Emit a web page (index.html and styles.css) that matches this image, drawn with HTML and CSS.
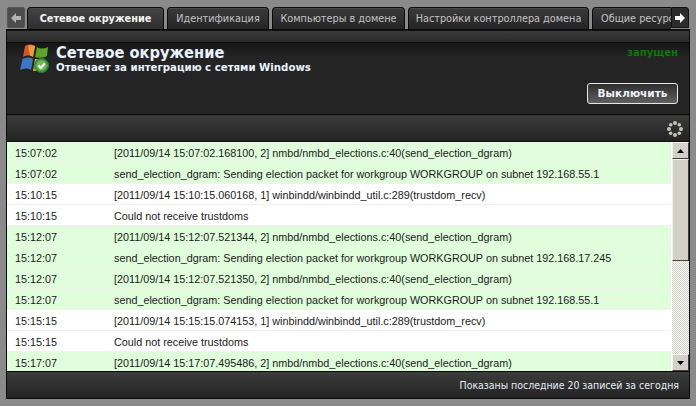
FILE: index.html
```html
<!DOCTYPE html>
<html lang="ru">
<head>
<meta charset="utf-8">
<title>Сетевое окружение</title>
<link rel="stylesheet" href="styles.css">
</head>
<body>
<div class="app">
  <div class="tabbar">
    <div class="nav nav-left"><svg width="10" height="10" viewBox="0 0 10 10"><path d="M0 5 5 0v3h5v4H5v3z" fill="#b4b4b4"/></svg></div>
    <div class="tabs">
      <div class="tab active">Сетевое окружение</div>
      <div class="tab w1">Идентификация</div>
      <div class="tab w2">Компьютеры в домене</div>
      <div class="tab w3">Настройки контроллера домена</div>
      <div class="tab w4">Общие ресурсы</div>
    </div>
    <div class="nav nav-right"><svg width="10" height="10" viewBox="0 0 10 10"><path d="M10 5 5 0v3H0v4h5v3z" fill="#fff"/></svg></div>
  </div>
  <div class="panel">
    <div class="strip"></div>
    <div class="head">
      <svg class="logo" width="32" height="32" viewBox="0 0 32 32">
        <path d="M7 3C10 1 14 1 17 3L15 14C12 12 8 12 5 14Z" fill="#d9532a"/>
        <path d="M10 2.500C12 2 15 2 17 3L15 14C14 13 13 13 12 12.600Z" fill="#e8a030"/>
        <path d="M19 4C22 6 26 6 30 4L29 13C26 15 21 15 17 14Z" fill="#5aa62c"/>
        <path d="M4.500 16C8 14 12 14 15 16L13 27C10 25 6 25 2 27Z" fill="#3a78c4"/>
        <path d="M17 16L24 16L24 28L15 28Z" fill="#e2a12e"/>
        <circle cx="23.500" cy="22.500" r="7" fill="#3f9a3a" stroke="#2e7d2c"/>
        <circle cx="23.500" cy="22.500" r="5" fill="#72b863"/>
        <path d="M20.500 22.500l2.300 2.500 4-4.500" fill="none" stroke="#fff" stroke-width="2"/>
      </svg>
      <div class="titles">
        <div class="title">Сетевое окружение</div>
        <div class="subtitle">Отвечает за интеграцию с сетями Windows</div>
      </div>
      <div class="side">
        <div class="status">запущен</div>
        <div class="btn">Выключить</div>
      </div>
    </div>
    <div class="toolbar">
      <svg class="spinner" width="16" height="16" viewBox="0 0 16 16" fill="#c4c2bc">
        <circle cx="8" cy="2" r="2"/><circle cx="12.300" cy="3.700" r="1.800"/><circle cx="14" cy="8" r="2"/><circle cx="12.300" cy="12.300" r="1.800"/><circle cx="8" cy="14" r="2"/><circle cx="3.700" cy="12.300" r="1.800"/><circle cx="2" cy="8" r="2"/><circle cx="3.700" cy="3.700" r="1.800"/>
      </svg>
    </div>
    <div class="log">
      <div class="rows">
        <div class="row green"><span class="time">15:07:02</span><span>[2011/09/14 15:07:02.168100, 2] nmbd/nmbd_elections.c:40(send_election_dgram)</span></div>
        <div class="row green"><span class="time">15:07:02</span><span>send_election_dgram: Sending election packet for workgroup WORKGROUP on subnet 192.168.55.1</span></div>
        <div class="row"><span class="time">15:10:15</span><span>[2011/09/14 15:10:15.060168, 1] winbindd/winbindd_util.c:289(trustdom_recv)</span></div>
        <div class="row"><span class="time">15:10:15</span><span>Could not receive trustdoms</span></div>
        <div class="row green"><span class="time">15:12:07</span><span>[2011/09/14 15:12:07.521344, 2] nmbd/nmbd_elections.c:40(send_election_dgram)</span></div>
        <div class="row green"><span class="time">15:12:07</span><span>send_election_dgram: Sending election packet for workgroup WORKGROUP on subnet 192.168.17.245</span></div>
        <div class="row green"><span class="time">15:12:07</span><span>[2011/09/14 15:12:07.521350, 2] nmbd/nmbd_elections.c:40(send_election_dgram)</span></div>
        <div class="row green"><span class="time">15:12:07</span><span>send_election_dgram: Sending election packet for workgroup WORKGROUP on subnet 192.168.55.1</span></div>
        <div class="row"><span class="time">15:15:15</span><span>[2011/09/14 15:15:15.074153, 1] winbindd/winbindd_util.c:289(trustdom_recv)</span></div>
        <div class="row"><span class="time">15:15:15</span><span>Could not receive trustdoms</span></div>
        <div class="row green"><span class="time">15:17:07</span><span>[2011/09/14 15:17:07.495486, 2] nmbd/nmbd_elections.c:40(send_election_dgram)</span></div>
      </div>
      <div class="scrollbar">
        <div class="sbtn"><svg width="7" height="4" viewBox="0 0 7 4"><path d="M3.500 0 7 4H0z"/></svg></div>
        <div class="thumb"></div>
        <div class="track"></div>
        <div class="sbtn"><svg width="7" height="4" viewBox="0 0 7 4"><path d="M3.500 4 7 0H0z"/></svg></div>
      </div>
    </div>
    <div class="footer">Показаны последние 20 записей за сегодня</div>
  </div>
</div>
</body>
</html>
```
FILE: styles.css
```css
* { box-sizing: border-box; }
html, body { margin: 0; padding: 0; }
body { width: 696px; height: 406px; background: #8a8a8a; overflow: hidden; font-family: "DejaVu Sans", sans-serif; }
.app { padding: 7px 6px 0 6px; }
.tabbar { display: flex; height: 22px; padding: 0 1px; }
.nav { width: 18px; height: 21px; background: linear-gradient(#4a4a4a, #2e2e2e); border: 1px solid #111; display: flex; align-items: center; justify-content: center; }
.nav-left { border-color: #555; border-radius: 2px; margin-right: 2px; background: #4c4c4c; }
.nav-right { flex: none; border-radius: 0 3px 0 0; background: #2c2c2c; }
.tabs { display: flex; flex: 1; overflow: hidden; gap: 3px; }
.tab { flex: none; height: 22px; padding-top: 4px; text-align: center; font-family: "DejaVu Sans Condensed", "DejaVu Sans", sans-serif; font-size: 10.800px; line-height: 14px; color: #c4c4c4; background: linear-gradient(#3a3a3a, #242424); border: 1px solid #0c0c0c; border-bottom: 0; border-radius: 4px 4px 0 0; box-shadow: inset 0 1px 0 #4a4a4a; white-space: nowrap; }
.tab.active { width: 137px; font-weight: 700; color: #f4f4f4; background: linear-gradient(#444, #2e2e2e); }
.w1 { width: 102px; }
.w2 { width: 133px; }
.w3 { width: 181px; }
.w4 { width: 90px; text-align: left; padding-left: 8px; }
.panel { width: 684px; height: 370px; background: #222; border: 1px solid #0a0a0a; display: flex; flex-direction: column; }
.strip { height: 13px; flex: none; background: linear-gradient(#3a3a3a, #2a2a2a); border-bottom: 1px solid #0c0c0c; border-top: 1px solid #111; }
.head { height: 72px; flex: none; display: flex; padding: 0 11px 0 11px; background: linear-gradient(#161616, #242424 14px, #242424); border-bottom: 1px solid #0a0a0a; }
.logo { flex: none; margin: 0 6px 0 0; }
.titles { flex: 1; color: #fff; }
.title { font-family: "DejaVu Sans Condensed", "DejaVu Sans", sans-serif; font-size: 16.300px; line-height: 19px; font-weight: 700; color: #eaf3ff; }
.subtitle { font-size: 10.200px; line-height: 11px; font-weight: 700; color: #eaf3ff; }
.side { display: flex; flex-direction: column; align-items: flex-end; }
.status { font-size: 10px; line-height: 13px; font-weight: 700; color: #077a07; margin-top: 3px; }
.btn { width: 91px; height: 21px; margin-top: 24px; border: 1px solid #e8e8e8; border-radius: 3px; background: linear-gradient(#2e2e2e, #606060); color: #eef2f8; font-size: 10.500px; font-weight: 700; line-height: 19px; text-align: center; }
.toolbar { height: 27px; flex: none; display: flex; justify-content: flex-end; align-items: center; padding-right: 6px; background: linear-gradient(#3a3a3a, #232323); border-top: 1px solid #333; border-bottom: 1px solid #111; }
.log { height: 229px; flex: none; display: flex; background: #fff; }
.rows { flex: 1; overflow: hidden; padding-right: 1px; }
.row { height: 21px; padding-top: 1px; display: flex; align-items: center; font-family: "Liberation Sans", sans-serif; font-size: 10.800px; color: #1a1a1a; background: #fff; border-bottom: 1px solid #f2f2f2; padding-left: 8px; white-space: nowrap; }
.row.green { background: #e0fedc; border-bottom-color: #eef6ea; }
.time { width: 99px; flex: none; }
.scrollbar { width: 17px; flex: none; display: flex; flex-direction: column; background: #d4d0c8; }
.sbtn { width: 17px; height: 17px; flex: none; display: flex; align-items: center; justify-content: center; background: #d4d0c8; border: 1px solid; border-color: #f4f2ee #404040 #404040 #f4f2ee; }
.thumb { height: 102px; flex: none; background: #d4d0c8; border: 1px solid; border-color: #f4f2ee #404040 #404040 #f4f2ee; }
.track { flex: 1; background-color: #fff; background-image: conic-gradient(#d4d0c8 25%, #fff 0 50%, #d4d0c8 0 75%, #fff 0); background-size: 2px 2px; }
.footer { flex: 1; display: flex; align-items: center; justify-content: flex-end; padding: 0 10px 0 0; border-top: 1px solid #0a0a0a; background: linear-gradient(#3c3c3c, #232323); font-family: "DejaVu Sans Condensed", "DejaVu Sans", sans-serif; font-size: 10.450px; color: #e8eef6; }
```
